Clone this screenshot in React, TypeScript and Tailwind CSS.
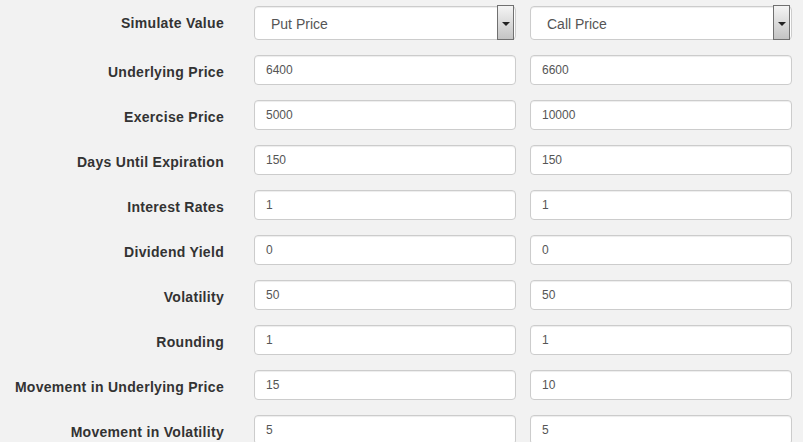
import React from "react";

const rows = [
  { label: "Underlying Price", a: "6400", b: "6600" },
  { label: "Exercise Price", a: "5000", b: "10000" },
  { label: "Days Until Expiration", a: "150", b: "150" },
  { label: "Interest Rates", a: "1", b: "1" },
  { label: "Dividend Yield", a: "0", b: "0" },
  { label: "Volatility", a: "50", b: "50" },
  { label: "Rounding", a: "1", b: "1" },
  { label: "Movement in Underlying Price", a: "15", b: "10" },
  { label: "Movement in Volatility", a: "5", b: "5" },
];

function FakeSelect({ value }: { value: string }) {
  return (
    <div className="relative h-[34px] w-[262px] rounded-[4px] border border-[#cccccc] bg-white shadow-[inset_0_1px_1px_rgba(0,0,0,0.075)]">
      <span className="absolute left-[16px] top-[7px] text-[14px] text-[#555555]">{value}</span>
      <div className="absolute right-[1px] top-[-2px] flex h-[35px] w-[17px] items-center justify-center border border-[#707070] bg-gradient-to-b from-[#f4f4f4] via-[#dcdcdc] to-[#c4c4c4]">
        <div className="mt-[2px] h-0 w-0 border-x-[4px] border-t-[4px] border-x-transparent border-t-[#222222]" />
      </div>
    </div>
  );
}

function Field({ value }: { value: string }) {
  return (
    <div className="flex h-[30px] w-[262px] items-center rounded-[4px] border border-[#cccccc] bg-white px-[11px] text-[12px] text-[#555555] shadow-[inset_0_1px_1px_rgba(0,0,0,0.075)]">
      {value}
    </div>
  );
}

export default function App() {
  return (
    <div
      className="h-[442px] w-[803px] overflow-hidden bg-[#f2f2f2] pt-[6px]"
      style={{ fontFamily: '"Liberation Sans", Arial, sans-serif' }}
    >
      <div className="flex flex-col gap-[15px]">
        <div className="flex items-center">
          <div className="w-[224px] text-right text-[14px] font-bold tracking-[0.3px] text-[#333333]">Simulate Value</div>
          <div className="ml-[30px] flex gap-[14px]">
            <FakeSelect value="Put Price" />
            <FakeSelect value="Call Price" />
          </div>
        </div>
        {rows.map((r) => (
          <div key={r.label} className="flex items-center">
            <div className="w-[224px] whitespace-nowrap pt-[4px] text-right text-[14px] font-bold tracking-[0.3px] text-[#333333]">{r.label}</div>
            <div className="ml-[30px] flex gap-[14px]">
              <Field value={r.a} />
              <Field value={r.b} />
            </div>
          </div>
        ))}
      </div>
    </div>
  );
}
